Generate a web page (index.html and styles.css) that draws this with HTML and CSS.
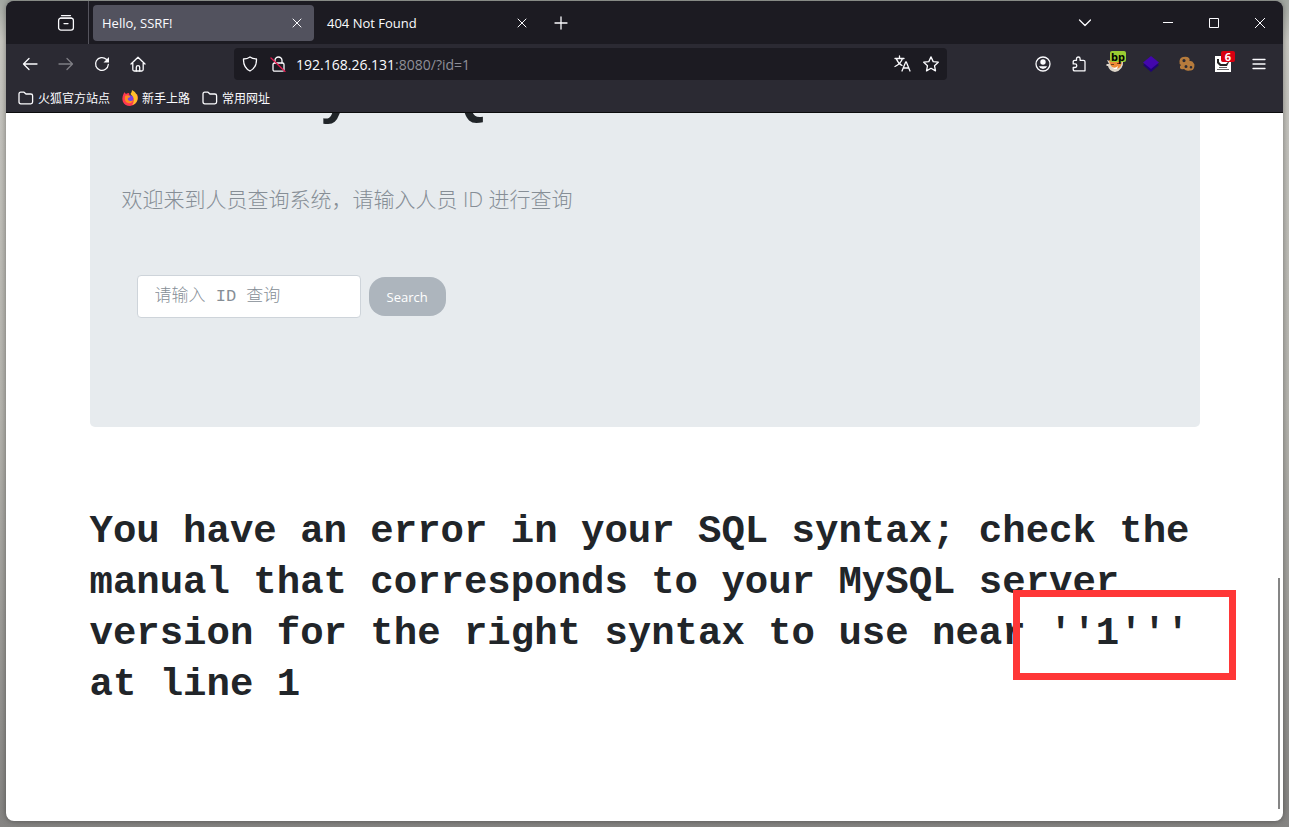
FILE: index.html
```
<!DOCTYPE html>
<html lang="zh-CN">
<head>
<meta charset="utf-8">
<title>Hello, SSRF!</title>
<link rel="stylesheet" href="styles.css">
</head>
<body>
<div class="window">
  <header class="chrome">
    <div class="tabstrip">
      <button class="icon-btn view-btn" aria-label="View"><svg width="18" height="18" viewBox="0 0 18 18"><path d="M4.5 1.6h9M3.4 4.1h11.2"/><rect x="1.6" y="4.1" width="14.8" height="12" rx="2.4"/><path d="M7 9.6h4"/></svg></button>
      <div class="tab active"><span class="tab-title">Hello, SSRF!</span><button class="tab-close" aria-label="Close tab"><svg width="10" height="10" viewBox="0 0 10 10"><path d="M1 1l8 8M9 1l-8 8"/></svg></button></div>
      <div class="tab"><span class="tab-title">404 Not Found</span><button class="tab-close" aria-label="Close tab"><svg width="10" height="10" viewBox="0 0 10 10"><path d="M1 1l8 8M9 1l-8 8"/></svg></button></div>
      <button class="icon-btn" aria-label="New tab"><svg width="14" height="14" viewBox="0 0 14 14"><path d="M7 1v12M1 7h12"/></svg></button>
      <button class="icon-btn list-btn" aria-label="List tabs"><svg width="14" height="14" viewBox="0 0 14 14"><path d="M1.500 4L7 9.500 12.500 4"/></svg></button>
      <div class="window-controls">
        <button aria-label="Minimize"><svg width="12" height="12" viewBox="0 0 12 12"><path class="hair" d="M1 5.500h10"/></svg></button>
        <button aria-label="Maximize"><svg width="12" height="12" viewBox="0 0 12 12"><path class="hair" d="M1.500 1.500h9v9h-9z"/></svg></button>
        <button aria-label="Close"><svg width="12" height="12" viewBox="0 0 12 12"><path class="hair" d="M1 1l10 10M11 1L1 11"/></svg></button>
      </div>
    </div>
    <div class="toolbar">
      <button class="icon-btn" aria-label="Back"><svg width="16" height="16" viewBox="0 0 16 16"><path d="M1.500 8H15M7 2.500L1.500 8 7 13.500"/></svg></button>
      <button class="icon-btn dim" aria-label="Forward"><svg width="16" height="16" viewBox="0 0 16 16"><path d="M1 8h13.500M9 2.500L14.500 8 9 13.500"/></svg></button>
      <button class="icon-btn" aria-label="Reload"><svg width="16" height="16" viewBox="0 0 16 16"><path d="M14.300 8.500A6.400 6.400 0 1 1 12.300 3.300L13.500 4.500"/><path class="solid" d="M15 1v5.500H9.500z"/></svg></button>
      <button class="icon-btn" aria-label="Home"><svg width="16" height="16" viewBox="0 0 16 16"><path d="M1 8l7-6.800L15 8M2.800 7v6.500q0 1.500 1.500 1.500h7.400q1.500 0 1.500-1.500V7"/><path d="M6.300 15v-3.700a1.700 1.700 0 0 1 3.400 0V15"/></svg></button>
      <div class="urlbar">
        <svg width="16" height="16" viewBox="0 0 16 16"><path d="M8 .9Q10.500 2.800 14.500 3q.3 8.500-6.500 12Q1.200 11.500 1.500 3 5.500 2.800 8 .9z"/></svg>
        <svg width="16" height="16" viewBox="0 0 16 16"><rect x="3" y="7" width="11" height="8.200" rx="1.500"/><path d="M5 7V4.500a3.500 3.500 0 0 1 7 0V7"/><path class="slash" d="M1 2l14 13.500"/></svg>
        <div class="url"><span class="host">192.168.26.131</span>:8080/?id=1</div>
        <svg width="18" height="18" viewBox="0 0 18 18"><path d="M2 3.500h9M6.500 1v2.500M9.500 3.500Q7.500 9 2 11.500M3.500 4q1.500 4.500 5.500 6.500M9 16l3.700-9h.6l3.700 9M10.200 13h5.600"/></svg>
        <svg width="16" height="16" viewBox="0 0 16 16"><path d="M8 .9l2.200 4.700 5.100.6-3.800 3.500 1 5.200L8 12.300l-4.500 2.600 1-5.200L.7 6.200l5.100-.6z"/></svg>
      </div>
      <button class="icon-btn" aria-label="Account"><svg width="16" height="16" viewBox="0 0 16 16"><circle cx="8" cy="8" r="7"/><circle class="solid" cx="8" cy="6" r="2.700"/><path class="solid" d="M3.800 10.300h8.400Q11 13 8 13t-4.200-2.700z"/></svg></button>
      <button class="icon-btn" aria-label="Extensions"><svg width="16" height="16" viewBox="0 0 16 16"><path d="M5.500 4.300V2.800a1.800 1.800 0 0 1 3.600 0V4.300H12.500q1.500 0 1.500 1.500v9H3.700q-1.500 0-1.500-1.500v-1.800H4a1.700 1.700 0 0 0 0-3.600H2.200V5.800q0-1.500 1.500-1.500z"/></svg></button>
      <button class="icon-btn" aria-label="Proxy"><svg class="plain" width="18" height="18" viewBox="0 0 18 18"><path fill="#ddd5c9" d="M1 5l5 2h6l5-2q1 10-8 12-6-1-7-6H.5v-2L3 9z"/><path fill="#ed8b36" d="M3 5l4 2h5l4-1q0 7-6 8-6-1-7-9z"/><path fill="#713d1d" d="M5 9h3v1H5zM11 8h2v1h-2z"/><path fill="#fff" d="M6 12q3 2 6-1l-1 3H8z"/></svg><span class="badge green">bp</span></button>
      <button class="icon-btn" aria-label="Layers"><svg class="plain" width="16" height="16" viewBox="0 0 16 16"><path fill="#1f0473" d="M0 9l8-5 8 5-8 7z"/><path fill="#4307ad" d="M0 6.500L8 0l8 6.500L8 13z"/></svg></button>
      <button class="icon-btn" aria-label="Cookies"><svg class="plain" width="16" height="16" viewBox="0 0 16 16"><path fill="#b67b3c" fill-rule="evenodd" d="M4 1q4-1 6 1 1 1 .5 3 3-.5 4 2 1.500 1 .8 4-1 4-4.500 3.500Q7 15.500 5 13q-3 1-4-1-.5-2 1-3-2-1-1.500-4Q1 1.500 4 1zm1 2a1.600 1.600 0 1 0 0 3.200A1.600 1.600 0 0 0 5 3zm2 6a1.500 1.500 0 1 0 0 3 1.500 1.500 0 0 0 0-3zm5 1a1.300 1.300 0 1 0 0 2.600 1.300 1.300 0 0 0 0-2.600z"/></svg></button>
      <button class="icon-btn" aria-label="Messages"><svg class="plain" width="16" height="16" viewBox="0 0 16 16"><path fill="#fff" d="M0 0h16v16H0z"/><path fill="#222" d="M2 3h2v3l2 2h5l2-2h1l-2 4H5L2 7z"/><path fill="#bbb" d="M6 2h3v4H7z"/><path fill="#666" d="M4 11h8v1H4zM2 13h12v1H2z"/></svg><span class="badge red">6</span></button>
      <button class="icon-btn" aria-label="Menu"><svg width="14" height="14" viewBox="0 0 14 14"><path d="M1 2.500h12M1 7h12M1 11.500h12"/></svg></button>
    </div>
    <nav class="bookmarks">
      <a href="#"><svg width="16" height="16" viewBox="0 0 16 16"><path d="M1 4q0-1.800 1.800-1.800H6L8 4h4.800q1.800 0 1.800 1.800V12q0 1.800-1.800 1.800h-10Q1 13.800 1 12z"/></svg>火狐官方站点</a>
      <a href="#"><svg class="plain" width="16" height="16" viewBox="0 0 16 16"><path fill="#ff3850" d="M1.500 4l.8-1.700L4 4q1-1 3-1l1 4 7-3q2 5-1 9-2.500 3-6 3-5 0-7-4-1.500-4 .5-8z"/><path fill="#ffbf2a" d="M10 0q4 2 5 5 1.500 4-.5 7Q13 14.500 10 15q3-4 1-8L8.500 4Q10 2 10 0z"/><circle cx="8" cy="8.500" r="3.200" fill="#7543e5"/><path fill="#ff8b20" d="M3 6q2-1.500 5 0 1 1-2 2-1 2 2 3 2 .3 3-1-1 4-5 3Q2 12 3 6z"/></svg>新手上路</a>
      <a href="#"><svg width="16" height="16" viewBox="0 0 16 16"><path d="M1 4q0-1.800 1.800-1.800H6L8 4h4.800q1.800 0 1.800 1.800V12q0 1.800-1.800 1.800h-10Q1 13.800 1 12z"/></svg>常用网址</a>
    </nav>
  </header>
  <main class="page">
    <div class="container">
      <section class="jumbotron">
        <h1 class="display">      y   Q</h1>
        <p class="lead">欢迎来到人员查询系统，请输入人员 ID 进行查询</p>
        <form class="search">
          <input type="text" aria-label="请输入 ID 查询" placeholder="请输入 ID 查询">
          <button type="button">Search</button>
        </form>
      </section>
      <div class="result">
        <h1>You have an error in your SQL syntax; check the manual that corresponds to your MySQL server version for the right syntax to use near ''1''' at line 1</h1>
        <div class="highlight"></div>
      </div>
    </div>
    <div class="scroll-thumb"></div>
  </main>
</div>
</body>
</html>
```
FILE: styles.css
```
* { box-sizing: border-box; }

body {
  margin: 0;
  height: 100vh;
  padding: 1px 6px 6px;
  background: linear-gradient(#a3a8a2, #c9c8c2 5%, #b5b4ae 50%, #858482);
  font-family: "Open Sans", "Noto Sans CJK SC", sans-serif;
  overflow: hidden;
}

button {
  border: 0;
  padding: 0;
  background: none;
  color: inherit;
  font: inherit;
}

.window {
  height: 100%;
  display: flex;
  flex-direction: column;
  border-radius: 8px;
  overflow: hidden;
  background: #fff;
  box-shadow: 0 0 6px rgba(0, 0, 0, 0.4);
}

/* Browser chrome */
.chrome {
  background: #2b2a33;
  color: #fbfbfe;
  border-bottom: 1px solid #0c0c0d;
  font-size: 12px;
}

.chrome svg {
  flex: none;
  fill: none;
  stroke: #fbfbfe;
  stroke-width: 1.3;
  stroke-linecap: round;
  stroke-linejoin: round;
}

.chrome svg.plain { stroke: none; }
.chrome .solid { fill: #fbfbfe; stroke: none; }
.chrome .hair { stroke-width: 1; stroke-linecap: butt; stroke-linejoin: miter; }
.chrome .slash { stroke: #e21a50; }

.icon-btn {
  position: relative;
  flex: none;
  width: 36px;
  height: 32px;
  display: flex;
  align-items: center;
  justify-content: center;
}

.dim { opacity: 0.4; }

.tabstrip {
  height: 43px;
  display: flex;
  align-items: center;
  background: #1c1b22;
}

.view-btn {
  width: 83px;
  height: 43px;
  padding-left: 37px;
  border-right: 1px solid #55545d;
  margin-right: 4px;
}

.tab {
  flex: 0 1 221px;
  height: 36px;
  margin-right: 4px;
  padding: 0 12px 0 9px;
  display: flex;
  align-items: center;
  justify-content: space-between;
  border-radius: 4px;
  font-size: 13px;
}

.tab.active { background: #52525e; }

.tab-close { display: flex; }
.tab-close svg { stroke-width: 1; }
.list-btn { margin-left: auto; margin-right: 42px; }

.window-controls { display: flex; }

.window-controls button {
  width: 46px;
  height: 43px;
  display: flex;
  align-items: center;
  justify-content: center;
}

.toolbar {
  height: 40px;
  padding: 0 6px;
  display: flex;
  align-items: center;
}

.urlbar {
  flex: 1;
  height: 32px;
  margin: 0 78px;
  padding: 0 8px;
  display: flex;
  align-items: center;
  gap: 12px;
  border-radius: 4px;
  background: #1c1b22;
}

.url {
  flex: 1;
  margin-left: -2px;
  font-size: 14px;
  color: #8f8f98;
}

.host { color: #fbfbfe; }

.badge {
  position: absolute;
  top: 3px;
  right: 0;
  padding: 0 4px;
  border-radius: 2px;
  font-size: 11px;
  line-height: 11px;
  font-weight: 700;
}

.green { background: #9acd32; color: #000; right: 7px; padding: 0 1px; }
.red { background: #d70010; color: #fff; right: 6px; }

.bookmarks {
  height: 28px;
  padding: 0 12px;
  display: flex;
  align-items: center;
  gap: 12px;
}

.bookmarks a {
  display: flex;
  align-items: center;
  gap: 4px;
  color: inherit;
  text-decoration: none;
  font-family: "Noto Sans CJK SC", sans-serif;
  line-height: 18px;
}

/* Page */
.page {
  position: relative;
  flex: 1;
  min-height: 0;
  overflow: hidden;
  color: #212529;
}

.container {
  max-width: 1110px;
  margin: 0 auto;
}

.jumbotron {
  display: flow-root;
  padding: 0 32px 109px;
  border-radius: 0 0 5px 5px;
  background: #e7ebee;
}

.display {
  margin: -48px 0 52px;
  font: 700 55px/66px "Liberation Mono", monospace;
  white-space: pre;
}

.lead {
  margin: 0 0 60px;
  font-family: "Open Sans", "Noto Sans CJK SC", sans-serif;
  font-size: 21px;
  font-weight: 300;
  line-height: 32px;
  color: #868e96;
}

.search {
  display: flex;
  align-items: center;
  gap: 8px;
  padding-left: 15px;
}

.search input {
  width: 224px;
  height: 43px;
  padding: 0 17px;
  border: 1px solid #ced4da;
  border-radius: 4px;
  background: #fff;
  font: 17px "Liberation Mono", "Noto Sans CJK SC", monospace;
}

.search input::placeholder { color: #868e96; font-weight: 300; opacity: 1; }

.search button {
  height: 39px;
  padding: 0 18px;
  border-radius: 16px;
  background: #adb5bd;
  color: #fff;
  font-size: 13px;
}

.result {
  position: relative;
  margin-top: 80px;
}

.result h1 {
  margin: 0;
  font: 700 39px/51px "Liberation Mono", monospace;
}

.highlight {
  position: absolute;
  top: 83px;
  right: -36px;
  width: 223px;
  height: 90px;
  border: 7px solid #ff3737;
}

.scroll-thumb {
  position: absolute;
  right: 3px;
  top: 465px;
  bottom: 12px;
  width: 2px;
  background: #858585;
}
```
